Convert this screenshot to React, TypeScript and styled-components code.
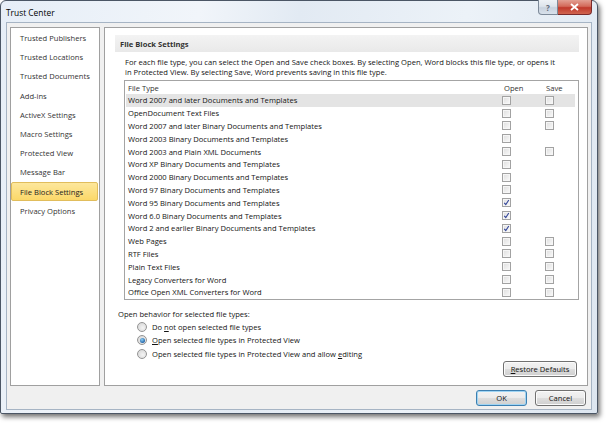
import React from 'react';
import styled, { createGlobalStyle, css } from 'styled-components';

const FONT = `"Open Sans", "Noto Sans", "DejaVu Sans", sans-serif`;

const GlobalStyle = createGlobalStyle`
  html, body { margin: 0; padding: 0; background: #ffffff; }
  body { font-family: ${FONT}; font-size: 7.6px; color: #141414; }
  * { box-sizing: border-box; }
`;

const Page = styled.div`
  width: 607px;
  height: 427px;
`;

const Window = styled.div`
  width: 598px;
  height: 414px;
  border: 1px solid #4b5665;
  border-radius: 6px 6px 2px 2px;
  background: linear-gradient(100deg, #e6eef7 0%, #f1f5fa 30%, #e2eaf3 45%, #ecf2f8 70%, #dde6f0 100%);
  box-shadow: 2px 3px 5px rgba(0, 0, 0, 0.55);
  display: flex;
  flex-direction: column;
  padding: 0 5px 3px 5px;
`;

const TitleBar = styled.div`
  height: 21px;
  display: flex;
  justify-content: space-between;
  align-items: flex-start;
`;

const Title = styled.div`
  font-size: 8.4px;
  color: #000;
  padding-top: 6px;
`;

const CaptionButtons = styled.div`
  display: flex;
  margin-top: -1px;
`;

const CaptionButton = styled.div<{ $close?: boolean }>`
  height: 15px;
  width: ${(p) => (p.$close ? '34px' : '20px')};
  border: 1px solid ${(p) => (p.$close ? '#7a2a2a' : '#7d8a99')};
  border-top: none;
  display: flex;
  align-items: center;
  justify-content: center;
  color: #fff;
  font-weight: bold;
  font-size: 8px;
  ${(p) =>
    p.$close
      ? css`
          border-radius: 0 0 4px 0;
          background: linear-gradient(#e3a093 0%, #d36a5a 45%, #c0392b 55%, #d0654f 100%);
          border-left: none;
        `
      : css`
          border-radius: 0 0 0 4px;
          background: linear-gradient(#eef2f6 0%, #dde4ec 45%, #c8d2de 55%, #d8e1eb 100%);
          color: #5d6878;
        `}
`;

const Client = styled.div`
  flex: 1;
  background: #f0f0f0;
  border: 1px solid #a6b4c4;
  display: flex;
  flex-direction: column;
  padding: 4px 3px 3px 3px;
  gap: 4px;
`;

const Panels = styled.div`
  display: flex;
  gap: 4px;
  flex: 1;
`;

const Nav = styled.div`
  width: 90px;
  background: #fff;
  border: 1px solid #a0a0a0;
  padding-top: 0.5px;
  display: flex;
  flex-direction: column;
`;

const NavItem = styled.div<{ $active?: boolean }>`
  height: 19.2px;
  margin-right: 1px;
  padding-left: 8px;
  display: flex;
  align-items: center;
  color: #333;
  white-space: nowrap;
  border: 1px solid transparent;
  border-radius: 2px;
  ${(p) =>
    p.$active &&
    css`
      background: linear-gradient(#fde79c, #fbd869);
      border-color: #e1bd5c;
      color: #1b1b1b;
    `}
`;

const Main = styled.div`
  flex: 1;
  background: #fff;
  border: 1px solid #a0a0a0;
  padding: 7px 8px 0 10px;
  display: flex;
  flex-direction: column;
`;

const SectionHeader = styled.div`
  height: 17px;
  background: linear-gradient(#f3f3f3, #e9e9e9);
  font-weight: bold;
  color: #333;
  padding-left: 5px;
  display: flex;
  align-items: center;
`;

const Description = styled.div`
  margin: 5px 0 0 10px;
  line-height: 10px;
`;

const Table = styled.div`
  margin: 3px 0 0 9px;
  height: 220px;
  border: 1px solid #a4a4a4;
  padding: 0 3px 0 1px;
`;

const Row = styled.div<{ $selected?: boolean; $header?: boolean }>`
  display: grid;
  grid-template-columns: 1fr 43px 30px;
  align-items: center;
  height: ${(p) => (p.$header ? '13px' : '12.8px')};
  padding-left: 2px;
  white-space: nowrap;
  color: ${(p) => (p.$header ? '#333' : '#141414')};
  background: ${(p) => (p.$selected ? '#e4e4e4' : 'transparent')};
`;

const Cell = styled.div<{ $shift?: number }>`
  display: flex;
  align-items: center;
  padding-left: ${(p) => p.$shift ?? 0}px;
`;

const CheckBox = styled.div`
  width: 9px;
  height: 9px;
  border: 1px solid #a2a2a2;
  background: linear-gradient(135deg, #dedede, #fafafa);
  box-shadow: inset 0 0 0 1px #f6f6f6;
  display: flex;
  align-items: center;
  justify-content: center;
`;

const Behavior = styled.div`
  margin: 9px 0 0 3px;
  line-height: 11px;
`;

const RadioList = styled.div`
  display: flex;
  flex-direction: column;
  margin-left: 22px;
`;

const RadioRow = styled.div`
  display: flex;
  align-items: center;
  height: 13.5px;
  gap: 5px;
`;

const Radio = styled.div<{ $on?: boolean }>`
  width: 10px;
  height: 10px;
  border-radius: 50%;
  border: 1px solid #949494;
  background: radial-gradient(circle at 60% 60%, #f4f4f4, #d2d2d2);
  display: flex;
  align-items: center;
  justify-content: center;
  &::after {
    content: '';
    display: ${(p) => (p.$on ? 'block' : 'none')};
    width: 5px;
    height: 5px;
    border-radius: 50%;
    background: radial-gradient(circle at 40% 35%, #8fd0f5, #1c5ea4 75%);
  }
`;

const RestoreRow = styled.div`
  display: flex;
  justify-content: flex-end;
  margin-top: 0;
  padding-right: 2px;
`;

const Button = styled.div<{ $w: number; $default?: boolean }>`
  width: ${(p) => p.$w}px;
  height: 16px;
  border: 1px solid ${(p) => (p.$default ? '#3c7fb1' : '#707070')};
  border-radius: 3px;
  background: linear-gradient(#f2f2f2 0%, #ebebeb 48%, #dddddd 52%, #cfcfcf 100%);
  box-shadow: inset 0 0 0 1px ${(p) => (p.$default ? '#9fd4f3' : '#fbfbfb')};
  display: flex;
  align-items: center;
  justify-content: center;
  color: #111;
`;

const ButtonBar = styled.div`
  display: flex;
  justify-content: flex-end;
  gap: 8px;
  padding-right: 2px;
  height: 16px;
`;

const Check = () => (
  <svg width="7" height="7" viewBox="0 0 7 7">
    <path d="M1.2 3.8 L2.8 5.5 L5.8 1" fill="none" stroke="#34479a" strokeWidth="1.1" />
  </svg>
);

const navItems = [
  'Trusted Publishers',
  'Trusted Locations',
  'Trusted Documents',
  'Add-ins',
  'ActiveX Settings',
  'Macro Settings',
  'Protected View',
  'Message Bar',
  'File Block Settings',
  'Privacy Options',
];

type FileRow = { name: string; save: boolean; checked?: boolean };

const rows: FileRow[] = [
  { name: 'Word 2007 and later Documents and Templates', save: true },
  { name: 'OpenDocument Text Files', save: true },
  { name: 'Word 2007 and later Binary Documents and Templates', save: true },
  { name: 'Word 2003 Binary Documents and Templates', save: false },
  { name: 'Word 2003 and Plain XML Documents', save: true },
  { name: 'Word XP Binary Documents and Templates', save: false },
  { name: 'Word 2000 Binary Documents and Templates', save: false },
  { name: 'Word 97 Binary Documents and Templates', save: false },
  { name: 'Word 95 Binary Documents and Templates', save: false, checked: true },
  { name: 'Word 6.0 Binary Documents and Templates', save: false, checked: true },
  { name: 'Word 2 and earlier Binary Documents and Templates', save: false, checked: true },
  { name: 'Web Pages', save: true },
  { name: 'RTF Files', save: true },
  { name: 'Plain Text Files', save: true },
  { name: 'Legacy Converters for Word', save: true },
  { name: 'Office Open XML Converters for Word', save: true },
];

export default function App() {
  return (
    <Page>
      <GlobalStyle />
      <Window>
        <TitleBar>
          <Title>Trust Center</Title>
          <CaptionButtons>
            <CaptionButton>?</CaptionButton>
            <CaptionButton $close>
              <svg width="9" height="8" viewBox="0 0 9 8">
                <path d="M1 1 L8 7 M8 1 L1 7" stroke="#fff" strokeWidth="1.8" />
              </svg>
            </CaptionButton>
          </CaptionButtons>
        </TitleBar>
        <Client>
          <Panels>
            <Nav>
              {navItems.map((n) => (
                <NavItem key={n} $active={n === 'File Block Settings'}>
                  {n}
                </NavItem>
              ))}
            </Nav>
            <Main>
              <SectionHeader>File Block Settings</SectionHeader>
              <Description>
                For each file type, you can select the Open and Save check boxes. By selecting Open, Word blocks this file type, or opens it
                <br />
                in Protected View. By selecting Save, Word prevents saving in this file type.
              </Description>
              <Table>
                <Row $header>
                  <Cell>File Type</Cell>
                  <Cell $shift={2}>Open</Cell>
                  <Cell $shift={1}>Save</Cell>
                </Row>
                {rows.map((r, i) => (
                  <Row key={r.name} $selected={i === 0}>
                    <Cell>{r.name}</Cell>
                    <Cell>
                      <CheckBox>{r.checked && <Check />}</CheckBox>
                    </Cell>
                    <Cell>{r.save && <CheckBox />}</Cell>
                  </Row>
                ))}
              </Table>
              <Behavior>Open behavior for selected file types:</Behavior>
              <RadioList>
                <RadioRow>
                  <Radio />
                  <span>
                    Do <u>n</u>ot open selected file types
                  </span>
                </RadioRow>
                <RadioRow>
                  <Radio $on />
                  <span>
                    <u>O</u>pen selected file types in Protected View
                  </span>
                </RadioRow>
                <RadioRow>
                  <Radio />
                  <span>
                    Open selected file types in Protected View and allow <u>e</u>diting
                  </span>
                </RadioRow>
              </RadioList>
              <RestoreRow>
                <Button $w={74}>
                  <span>
                    <u>R</u>estore Defaults
                  </span>
                </Button>
              </RestoreRow>
            </Main>
          </Panels>
          <ButtonBar>
            <Button $w={51} $default>
              OK
            </Button>
            <Button $w={51}>Cancel</Button>
          </ButtonBar>
        </Client>
      </Window>
    </Page>
  );
}
